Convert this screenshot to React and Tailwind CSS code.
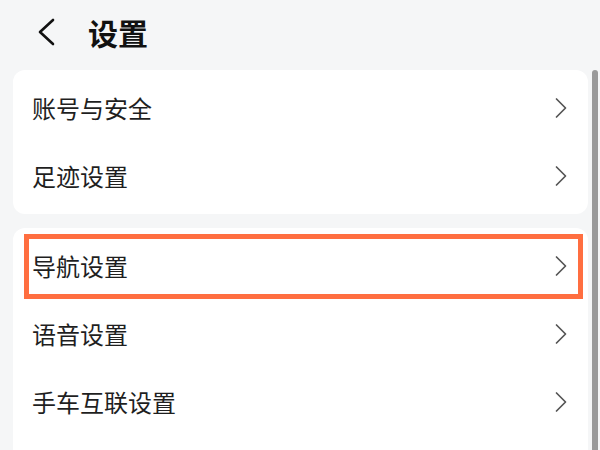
import React from 'react';

const Chevron = () => (
  <svg width="14" height="22" viewBox="0 0 14 22" fill="none">
    <path d="M2.5 2 L11.5 11 L2.5 20" stroke="#555" strokeWidth="1.7" strokeLinecap="round" strokeLinejoin="round" />
  </svg>
);

const Row = ({ label, highlight }) => (
  <div className="relative h-[68px] flex items-center justify-between pl-[19px] pr-[20px]">
    <span className="text-[24px] text-[#1f1f1f] leading-none">{label}</span>
    <Chevron />
    {highlight && (
      <div className="absolute left-[11px] right-[5px] top-[2px] h-[65px] border-[5px] border-[#ff6e40] pointer-events-none"></div>
    )}
  </div>
);

export default function App() {
  return (
    <div
      className="relative w-[600px] h-[450px] overflow-hidden bg-[#f5f6f7]"
      style={{ fontFamily: '"Noto Sans CJK SC", "Noto Sans", sans-serif' }}
    >
      <div className="h-[70px] flex items-center pl-[36px] pb-[6px]">
        <svg width="20" height="28" viewBox="0 0 20 28" fill="none">
          <path d="M17 2 L4 14 L17 26" stroke="#111" strokeWidth="2.6" strokeLinecap="round" strokeLinejoin="round" />
        </svg>
        <h1 className="ml-[32px] text-[30px] font-bold text-[#111] leading-none">设置</h1>
      </div>

      <div className="ml-[13px] mr-[12px] flex flex-col gap-[14px]">
        <div className="bg-white rounded-[12px] py-[4px]">
          <Row label="账号与安全" />
          <Row label="足迹设置" />
        </div>
        <div className="bg-white rounded-[12px] pt-[4px] pb-[60px]">
          <Row label="导航设置" highlight />
          <Row label="语音设置" />
          <Row label="手车互联设置" />
        </div>
      </div>

      <div className="absolute right-[2px] top-[70px] bottom-0 w-[6px] rounded-t-full bg-[#9a9a9a]"></div>
    </div>
  );
}
